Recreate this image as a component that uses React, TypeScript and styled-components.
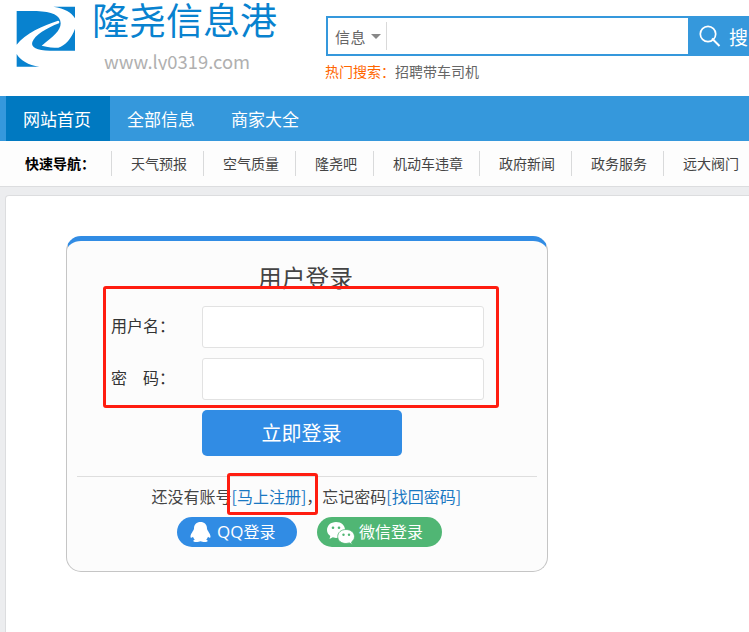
import React from 'react';
import styled, { createGlobalStyle } from 'styled-components';

const GlobalStyle = createGlobalStyle`
  * { box-sizing: border-box; }
  html, body { margin: 0; padding: 0; overflow: hidden; }
  body {
    width: 749px;
    height: 632px;
    background: #ecedef;
    font-family: "Noto Sans CJK SC", sans-serif;
    font-weight: 400;
    color: #444;
  }
`;

const Page = styled.div`
  width: 749px;
  height: 632px;
  overflow: hidden;
  display: flex;
  flex-direction: column;
`;

const Header = styled.header`
  flex: none;
  height: 96px;
  background: #fff;
  display: flex;
`;

const Brand = styled.div`
  flex: none;
  width: 326px;
  padding-left: 8px;
  display: flex;
`;

const LogoMark = styled.svg`
  flex: none;
  width: 80px;
  height: 75px;
`;

const BrandText = styled.div`
  padding-left: 4px;
  white-space: nowrap;
`;

const BrandName = styled.div`
  height: 40px;
  line-height: 38px;
  font-size: 37px;
  color: #0882cf;
`;

const BrandUrl = styled.div`
  height: 30px;
  padding-left: 12px;
  overflow: hidden;
  line-height: 42px;
  font-size: 18.4px;
  color: #b0b0b0;
`;

const SearchArea = styled.div`
  flex: none;
  width: 460px;
  padding-top: 16px;
`;

const SearchBar = styled.div`
  height: 40px;
  display: flex;
`;

const SearchField = styled.div`
  width: 362px;
  border: 2px solid #3598dc;
  border-right: 0;
  display: flex;
  align-items: center;
`;

const SearchType = styled.div`
  width: 59px;
  height: 28px;
  padding-left: 7px;
  border-right: 1px solid #d9d9d9;
  display: flex;
  align-items: center;
  gap: 5px;
  font-size: 15px;
  letter-spacing: 0.4px;
  color: #666;
`;

const Caret = styled.i`
  border: 5px solid transparent;
  border-top-color: #888;
  border-bottom: 0;
`;

const SearchButton = styled.div`
  flex: 1;
  background: #3598dc;
  padding-left: 10px;
  display: flex;
  align-items: center;
  gap: 8px;
  color: #fff;
  font-size: 19px;
  white-space: nowrap;
`;

const HotSearch = styled.div`
  height: 32px;
  margin-left: -1px;
  line-height: 31px;
  font-size: 14px;
  color: #666;
`;

const HotLabel = styled.span`
  color: #ff6600;
`;

const MainNav = styled.nav`
  flex: none;
  height: 45px;
  padding-left: 6px;
  background: #3598dc;
  display: flex;
`;

const NavItem = styled.a<{ $active?: boolean }>`
  width: 104px;
  padding-left: 17px;
  line-height: 45px;
  font-size: 17px;
  color: #fff;
  background: ${(p) => (p.$active ? '#0079c1' : 'transparent')};
`;

const QuickNav = styled.nav`
  flex: none;
  height: 46px;
  padding-left: 25px;
  background: #fdfdfd;
  border-bottom: 1px solid #dcdddf;
  display: flex;
  align-items: center;
  font-size: 14px;
  white-space: nowrap;
`;

const QuickLabel = styled.strong`
  flex: none;
  width: 86px;
  line-height: 24px;
  padding-bottom: 2px;
  color: #000;
`;

const QuickItem = styled.a`
  flex: none;
  height: 25px;
  line-height: 25px;
  padding: 0 16px 0 19px;
  border-left: 1px solid #d9dadb;
`;

const Panel = styled.main`
  flex: 1;
  margin: 8px -10px 0 5px;
  padding: 40px 0 0 60px;
  background: #fff;
  border: 1px solid #dcdddf;
  border-bottom: 0;
  border-radius: 4px 0 0 0;
`;

const LoginCard = styled.section`
  position: relative;
  width: 482px;
  height: 336px;
  padding: 0 10px;
  background: #fcfcfc;
  border: 1px solid #c5c5c5;
  border-top: 5px solid #318ce4;
  border-radius: 15px;
  white-space: nowrap;
`;

const CardTitle = styled.h1`
  margin: 0;
  height: 65px;
  padding: 10px 3px 0 0;
  line-height: 53px;
  text-align: center;
  font-size: 23.7px;
  font-weight: 400;
  color: #444;
`;

const Field = styled.label`
  height: 42px;
  margin-bottom: 10px;
  padding-left: 34px;
  display: flex;
  align-items: center;
  font-size: 16px;
  color: #333;
`;

const FieldName = styled.span`
  width: 91px;
  padding-bottom: 4px;
`;

const TextInput = styled.input`
  width: 282px;
  height: 42px;
  background: #fff;
  border: 1px solid #e2e2e2;
  border-radius: 3px;
  outline: 0;
`;

const SubmitButton = styled.button`
  display: block;
  width: 200px;
  height: 46px;
  margin-left: 125px;
  padding: 0 1px 0 0;
  border: 0;
  border-radius: 5px;
  background: #318ce4;
  color: #fff;
  font: 400 20px/46px "Noto Sans CJK SC", sans-serif;
`;

const CardFooter = styled.div`
  height: 41px;
  margin-top: 20px;
  padding-left: 74.5px;
  border-top: 1px solid #dedede;
  line-height: 38px;
  font-size: 16px;
  color: #444;
`;

const TextLink = styled.a`
  color: #1a78c2;
`;

const SocialRow = styled.div`
  display: flex;
  gap: 20px;
  padding-left: 100px;
`;

const SocialButton = styled.a<{ $kind: 'qq' | 'wechat' }>`
  width: ${(p) => (p.$kind === 'qq' ? 120 : 125)}px;
  height: 30px;
  padding-left: ${(p) => (p.$kind === 'qq' ? 13 : 9)}px;
  border-radius: 15px;
  background: ${(p) => (p.$kind === 'qq' ? '#318ce4' : '#50b674')};
  display: flex;
  align-items: center;
  gap: ${(p) => (p.$kind === 'qq' ? 6 : 4)}px;
  color: #fff;
  font-size: 16px;
`;

const SocialLabel = styled.span`
  padding-bottom: 2px;
`;

const LatinText = styled.span`
  font-family: "Open Sans", sans-serif;
  font-size: 17px;
  line-height: 20px;
`;

const Highlight = styled.div<{ $x: number; $y: number; $w: number; $h: number }>`
  position: absolute;
  left: ${(p) => p.$x}px;
  top: ${(p) => p.$y}px;
  width: ${(p) => p.$w}px;
  height: ${(p) => p.$h}px;
  border: 3px solid #ff1d10;
  border-radius: 3px;
  pointer-events: none;
`;

const quickLinks = ['天气预报', '空气质量', '隆尧吧', '机动车违章', '政府新闻', '政务服务', '远大阀门'];

export default function App() {
  return (
    <>
      <GlobalStyle />
      <Page>
        <Header>
          <Brand>
            <LogoMark viewBox="24 0 240 225" fill="#0882cf">
              <path d="M50 33H110C155 35 182 45 182 70C182 92 160 110 125 137C145 142 160 143 175 143C195 137 215 115 225 86V152H150C110 151 92 142 97 126C104 106 140 84 177 70C179 66 178 62 174 62C130 76 75 100 50 134Z" />
              <path d="M160 20H225V55C214 36 195 26 160 20Z" />
              <path d="M50 162C60 180 85 196 118 200H50Z" />
            </LogoMark>
            <BrandText>
              <BrandName>隆尧信息港</BrandName>
              <BrandUrl>www.ly0319.com</BrandUrl>
            </BrandText>
          </Brand>
          <SearchArea>
            <SearchBar>
              <SearchField>
                <SearchType>
                  信息
                  <Caret />
                </SearchType>
              </SearchField>
              <SearchButton>
                <svg width="23" height="22" viewBox="0 0 23 22" fill="none" stroke="#fff" strokeWidth="1.7">
                  <circle cx="10" cy="9" r="7.7" />
                  <path d="M14 13.5L21.500 21" strokeWidth="2" />
                </svg>
                搜索
              </SearchButton>
            </SearchBar>
            <HotSearch>
              <HotLabel>热门搜索：</HotLabel>招聘带车司机
            </HotSearch>
          </SearchArea>
        </Header>
        <MainNav>
          <NavItem $active>网站首页</NavItem>
          <NavItem>全部信息</NavItem>
          <NavItem>商家大全</NavItem>
        </MainNav>
        <QuickNav>
          <QuickLabel>快速导航：</QuickLabel>
          {quickLinks.map((name) => (
            <QuickItem key={name}>{name}</QuickItem>
          ))}
        </QuickNav>
        <Panel>
          <LoginCard>
            <CardTitle>用户登录</CardTitle>
            <Field>
              <FieldName>用户名：</FieldName>
              <TextInput type="text" />
            </Field>
            <Field>
              <FieldName>密　码：</FieldName>
              <TextInput type="password" />
            </Field>
            <SubmitButton>立即登录</SubmitButton>
            <CardFooter>
              还没有账号<TextLink>[马上注册]</TextLink>，忘记密码<TextLink>[找回密码]</TextLink>
            </CardFooter>
            <SocialRow>
              <SocialButton $kind="qq">
                <svg width="21" height="22" viewBox="0 0 21 22" fill="#fff">
                  <path d="M10.500 1C6.600 1 4 3.600 4 7.500C4 9.500 0.500 12.500 0.500 15.500C0.500 17.500 1.700 17 3 15.700C3.300 17 4 17.700 4.800 18.500C2.500 19.500 3 21 6 21C8 21 9.500 20.700 10.500 20.200C11.500 20.700 13 21 15 21C18 21 18.500 19.500 16.200 18.500C17 17.700 17.700 17 18 15.700C19.300 17 20.500 17.500 20.500 15.500C20.500 12.500 17 9.500 17 7.500C17 3.600 14.400 1 10.500 1Z" />
                </svg>
                <SocialLabel>
                  <LatinText>QQ</LatinText>登录
                </SocialLabel>
              </SocialButton>
              <SocialButton $kind="wechat">
                <svg width="29" height="25" viewBox="0 0 29 25">
                  <path d="M10 2C4.700 2 1 5.600 1 10C1 12.500 2.200 14.600 4.300 16L3.500 19L6.800 17.300L10 18C15.500 18 19 14.500 19 10S15.500 2 10 2Z" fill="#fff" />
                  <path d="M20 9.500C15 9.500 11.700 12.700 11.700 16.600S15 23.500 20 23.500L23.500 22.900L26.300 24.500L25.500 22C27.400 20.700 28.500 18.900 28.500 16.600C28.500 12.700 25 9.500 20 9.500Z" fill="#fff" stroke="#50b674" strokeWidth="0.8" />
                  <g fill="#50b674">
                    <circle cx="7" cy="7.700" r="1.300" />
                    <circle cx="13" cy="7.700" r="1.300" />
                    <circle cx="17.500" cy="14.700" r="1.200" />
                    <circle cx="23" cy="14.700" r="1.200" />
                  </g>
                </svg>
                <SocialLabel>微信登录</SocialLabel>
              </SocialButton>
            </SocialRow>
            <Highlight $x={36} $y={45} $w={396} $h={122} />
            <Highlight $x={160} $y={232} $w={91} $h={42} />
          </LoginCard>
        </Panel>
      </Page>
    </>
  );
}
